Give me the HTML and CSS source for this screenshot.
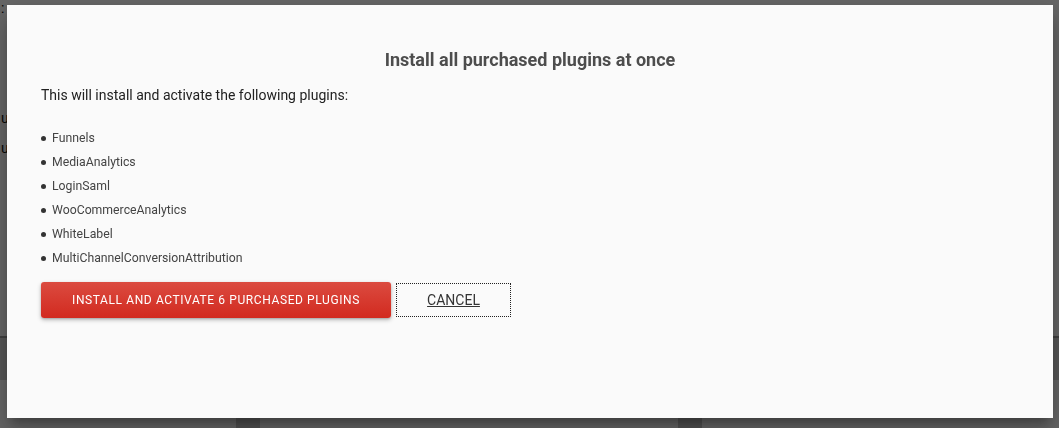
FILE: index.html
```html
<!DOCTYPE html>
<html lang="en">
<head>
<meta charset="utf-8">
<title>Marketplace</title>
<link rel="stylesheet" href="styles.css">
</head>
<body>
  <div class="page">
    <div class="page-head">
      <span class="crumb">:</span>
      <p class="line line-a">upload</p>
      <p class="line line-b">update</p>
    </div>
    <div class="page-band"></div>
    <div class="page-grid">
      <div class="card card-a"></div>
      <div class="card card-b"></div>
      <div class="card card-c"></div>
    </div>
  </div>

  <div class="overlay"></div>

  <div class="modal">
    <h2 class="modal-title">Install all purchased plugins at once</h2>
    <p class="modal-intro">This will install and activate the following plugins:</p>
    <ul class="plugin-list">
      <li>Funnels</li>
      <li>MediaAnalytics</li>
      <li>LoginSaml</li>
      <li>WooCommerceAnalytics</li>
      <li>WhiteLabel</li>
      <li>MultiChannelConversionAttribution</li>
    </ul>
    <div class="modal-actions">
      <button class="btn-primary" type="button">Install and activate 6 purchased plugins</button>
      <button class="btn-cancel" type="button">Cancel</button>
    </div>
  </div>
</body>
</html>
```

FILE: styles.css
```css
html, body {
  margin: 0;
  padding: 0;
  height: 100%;
  overflow: hidden;
}

body {
  font-family: Roboto, "Liberation Sans", Arial, sans-serif;
  background: #ffffff;
}

/* page underneath the dialog */
.page {
  display: flex;
  flex-direction: column;
  height: 100%;
}

.page-head {
  height: 336px;
  background: #ffffff;
  padding-left: 1px;
  box-sizing: border-box;
}

.crumb {
  display: block;
  font-size: 14px;
  line-height: 16px;
  color: #000;
}

.line {
  margin: 0;
  font-size: 14px;
  line-height: 18px;
  color: #111;
}

.line-a { margin-top: 93px; }
.line-b { margin-top: 12px; }

.page-band {
  height: 44px;
  background: #d8d8d8;
  border-top: 2px solid #a0a0a0;
  box-sizing: border-box;
}

.page-grid {
  flex: 1;
  display: flex;
  gap: 24px;
  background: #cbcbcb;
}

.card {
  background: #ffffff;
}

.card-a { width: 236px; }
.card-b { width: 418px; }
.card-c { flex: 1; }

.overlay {
  position: fixed;
  inset: 0;
  background: rgba(0, 0, 0, 0.6);
}

/* dialog */
.modal {
  position: fixed;
  left: 7px;
  top: 5px;
  width: 1046px;
  height: 413px;
  box-sizing: border-box;
  padding: 44px 34px 0;
  background: #fafafa;
  box-shadow: 0 16px 24px 2px rgba(0, 0, 0, 0.14),
              0 6px 30px 5px rgba(0, 0, 0, 0.12),
              0 8px 10px -5px rgba(0, 0, 0, 0.3);
}

.modal-title {
  margin: 0;
  font-size: 18px;
  line-height: 22px;
  font-weight: 700;
  text-align: center;
  color: #4d4d4d;
}

.modal-intro {
  margin: 14px 0 0;
  font-size: 14px;
  line-height: 20px;
  color: #212121;
}

.plugin-list {
  list-style: none;
  margin: 21px 0 0;
  padding: 0;
}

.plugin-list li {
  display: flex;
  align-items: center;
  font-size: 12.25px;
  line-height: 24px;
  color: #444;
}

.plugin-list li::before {
  content: "";
  width: 5px;
  height: 5px;
  border-radius: 50%;
  background: #333;
  margin-right: 6px;
}

.modal-actions {
  display: flex;
  align-items: center;
  gap: 5px;
  margin-top: 12px;
}

.btn-primary {
  height: 36px;
  width: 350px;
  padding: 0;
  border: none;
  border-radius: 3px;
  background: linear-gradient(#db4b40, #d22a1f);
  color: #ffffff;
  font-family: inherit;
  font-size: 12px;
  letter-spacing: 0.6px;
  text-transform: uppercase;
  box-shadow: 0 2px 4px rgba(0, 0, 0, 0.25), 0 1px 2px rgba(0, 0, 0, 0.15);
}

.btn-cancel {
  height: 34px;
  width: 115px;
  padding: 0;
  border: 1px dotted #222;
  background: transparent;
  color: #333;
  font-family: inherit;
  font-size: 14px;
  text-transform: uppercase;
  text-decoration: underline;
}
```
